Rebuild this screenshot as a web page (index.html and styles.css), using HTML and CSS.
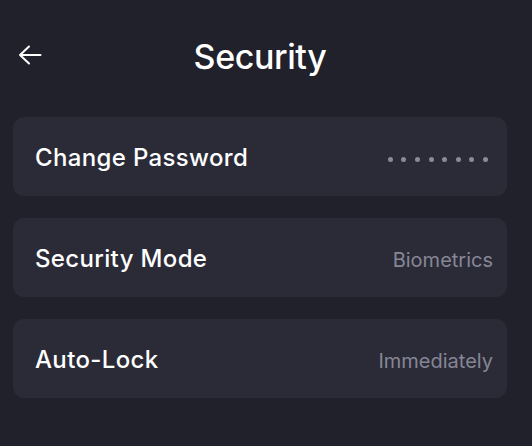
FILE: index.html
```html
<!DOCTYPE html>
<html>
<head>
<meta charset="utf-8">
<link rel="stylesheet" href="styles.css">
</head>
<body>
<div class="screen">
  <header class="header">
    <button class="back" aria-label="Back">
      <svg width="24" height="20" viewBox="0 0 24 20"><path d="M22.5 10H2M11 1.5L2 10l9 8.5" fill="none" stroke="#fff" stroke-width="2" stroke-linecap="round" stroke-linejoin="round"/></svg>
    </button>
    <h1 class="title">Security</h1>
  </header>
  <div class="list">
    <div class="card">
      <span class="label">Change Password</span>
      <span class="dots"><i></i><i></i><i></i><i></i><i></i><i></i><i></i><i></i></span>
    </div>
    <div class="card">
      <span class="label">Security Mode</span>
      <span class="value">Biometrics</span>
    </div>
    <div class="card">
      <span class="label">Auto-Lock</span>
      <span class="value">Immediately</span>
    </div>
  </div>
</div>
</body>
</html>
```
FILE: styles.css
```css
html, body {
  margin: 0;
  padding: 0;
  background: #21212b;
}
body {
  font-family: Inter, "Open Sans", sans-serif;
  color: #fff;
  width: 532px;
  height: 446px;
  overflow: hidden;
}
.screen {
  padding: 0 25px 0 13px;
}
.header {
  position: relative;
  height: 117px;
  display: flex;
  align-items: flex-start;
  justify-content: center;
}
.back {
  position: absolute;
  left: 5px;
  top: 45px;
  background: none;
  border: 0;
  padding: 0;
  display: flex;
}
.title {
  margin: 35px 0 0 0;
  font-size: 34px;
  font-weight: 500;
  letter-spacing: -0.4px;
  line-height: 44px;
}
.list {
  display: flex;
  flex-direction: column;
  gap: 22px;
}
.card {
  height: 79px;
  box-sizing: border-box;
  background: #2b2b38;
  border-radius: 11px;
  display: flex;
  align-items: center;
  justify-content: space-between;
  padding: 0 14px 0 22px;
}
.label {
  font-size: 24px;
  font-weight: 500;
  letter-spacing: 0.35px;
  color: #fff;
  margin-top: 2px;
}
.value {
  font-size: 20px;
  font-weight: 400;
  color: #868695;
  margin-top: 4px;
}
.dots {
  display: flex;
  gap: 8.6px;
  margin-right: 5px;
  margin-top: 5px;
}
.dots i {
  width: 5px;
  height: 5px;
  border-radius: 50%;
  background: #8a8a99;
}
```
